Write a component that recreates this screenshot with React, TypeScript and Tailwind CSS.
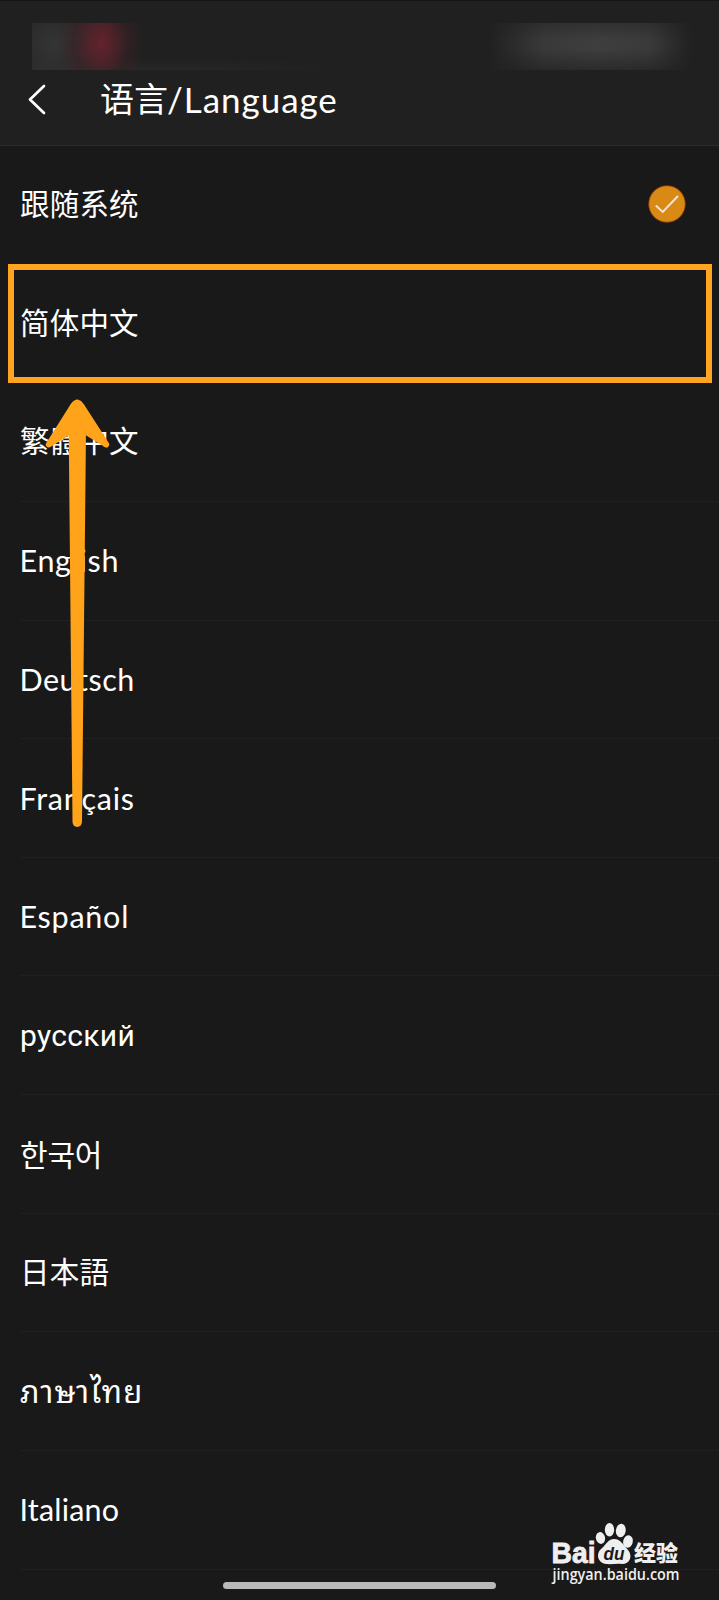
type Language = {
  label: string;
  className: string;
  selected?: boolean;
  divider?: boolean;
};

const LATIN = "font-['Lato',sans-serif] text-[30.5px] -ml-[0.5px]";
const CJK = "font-['Noto_Sans_CJK_SC',sans-serif] text-[29.5px] tracking-[0.2px] pb-[4px]";

const languages: Language[] = [
  { label: '跟随系统', className: CJK, selected: true },
  { label: '简体中文', className: CJK },
  { label: '繁體中文', className: CJK, divider: true },
  { label: 'English', className: `${LATIN} tracking-[0.7px]`, divider: true },
  { label: 'Deutsch', className: `${LATIN} tracking-[0.5px]`, divider: true },
  { label: 'Français', className: `${LATIN} tracking-[0.75px]`, divider: true },
  { label: 'Español', className: `${LATIN} tracking-[0.75px]`, divider: true },
  { label: 'русский', className: "font-['Roboto',sans-serif] text-[30px] tracking-[0.3px] pt-[2px]", divider: true },
  { label: '한국어', className: "font-['Noto_Sans_CJK_KR',sans-serif] text-[30px] tracking-[-0.2px] pb-px", divider: true },
  { label: '日本語', className: "font-['Noto_Sans_CJK_JP',sans-serif] text-[29.5px] tracking-[0.2px] pb-[4px]", divider: true },
  { label: 'ภาษาไทย', className: "font-['Noto_Sans_Thai_Looped','Loma','Waree','Noto_Sans',sans-serif] text-[31px] tracking-[1.1px] pb-[3px]", divider: true },
  { label: 'Italiano', className: `${LATIN} tracking-[0.2px] pb-px`, divider: true },
];

function Header() {
  return (
    <header className="relative h-[146px] shrink-0 border-t border-b border-t-[#151515] border-b-[#2b2b2b] bg-[#202020]">
      {/* Blurred status bar */}
      <div className="absolute top-[22px] left-8 h-[47px] w-[320px] bg-[radial-gradient(ellipse_44px_60px_at_69px_20px,#65222c_0%,#5b222bd0_25%,#3c212590_60%,transparent_100%),radial-gradient(ellipse_75px_60px_at_24px_22px,#353535,transparent),linear-gradient(to_top,#272727,transparent_25%)] mask-r-from-50%" />
      <div className="absolute top-[22px] left-[480px] h-[47px] w-[212px] bg-[linear-gradient(to_bottom,#20202070,transparent_35%,transparent_55%,#202020a0),linear-gradient(to_right,transparent_4%,#393939_30%,#3e3e3e_55%,#3a3a3a_80%,transparent)]" />
      <div className="flex h-full items-end pb-[22px] pl-[27px]">
        <svg className="mb-[8px] h-[32px] w-5 shrink-0" viewBox="0 0 20 32" fill="none" stroke="#fff" strokeWidth="2.7" strokeLinecap="round" strokeLinejoin="round">
          <path d="M17 3 3 16.5 17 30" />
        </svg>
        <h1 className="ml-[53px] flex h-[46px] items-center whitespace-nowrap text-white">
          <span className="pb-[4px] font-['Noto_Sans_CJK_SC',sans-serif] text-[34px] leading-none">语言</span>
          <span className="-ml-px pb-[1px] font-['Lato',sans-serif] text-[35px] leading-none tracking-[0.95px]">/Language</span>
        </h1>
      </div>
    </header>
  );
}

function CheckBadge() {
  return (
    <svg className="mb-px h-[38px] w-[38px]" viewBox="0 0 38 38" fill="none">
      <circle cx="19" cy="19" r="18.3" fill="#d98a14" stroke="#8a3508" strokeWidth="0.8" />
      <path d="M7.8 20.5 14.7 27 30 11" stroke="#fbe3d2" strokeWidth="1.9" />
    </svg>
  );
}

function Arrow() {
  return (
    <svg className="absolute top-[398px] left-[40px] h-[432px] w-[75px]" viewBox="40 398 75 432" fill="#ffa31a" stroke="#ffa31a" strokeLinejoin="round">
      <path strokeWidth="6" d="M77.2 402.5Q75 403 73 406L48.8 444.5 72 430H83L106.3 444.5 81.5 406Q79.5 403 77.2 402.5Z" />
      <path strokeWidth="2" d="M69.7 430H85L81 822Q80.5 826 77.2 826T73.5 822Z" />
    </svg>
  );
}

function Watermark() {
  return (
    <svg className="absolute top-[1516px] left-[545px] h-[76px] w-[142px] overflow-visible" viewBox="545 1516 142 76" fill="#efefef">
      <text x="551.5" y="1562.5" fontFamily="Liberation Sans" fontWeight="700" fontSize="29.5" textLength="44" lengthAdjust="spacingAndGlyphs" stroke="#efefef" strokeWidth="0.8">Bai</text>
      <ellipse cx="600.5" cy="1538" rx="4.6" ry="6" transform="rotate(-12 600.5 1538)" />
      <ellipse cx="609.5" cy="1529.8" rx="4.7" ry="6.8" />
      <ellipse cx="620.8" cy="1530.5" rx="4.9" ry="6.8" transform="rotate(8 620.8 1530.5)" />
      <ellipse cx="628" cy="1541.5" rx="4.8" ry="6.3" transform="rotate(14 628 1541.5)" />
      <path d="M614 1539C608 1539 606 1545 601 1549C596 1553 597 1563 606 1564C611 1564.5 617 1563.5 622 1564C630 1564 633 1556 628 1550C623 1545 621 1539 614 1539Z" />
      <text x="603.5" y="1559.5" fill="#1a1a1a" fontFamily="Liberation Sans" fontWeight="700" fontStyle="italic" fontSize="18" textLength="21" lengthAdjust="spacingAndGlyphs">du</text>
      <text x="634" y="1560.5" fontFamily="Noto Sans CJK SC" fontWeight="900" fontSize="22" textLength="44" lengthAdjust="spacingAndGlyphs">经验</text>
      <text x="552.5" y="1579.5" fontFamily="Open Sans" fontWeight="600" fontSize="16" textLength="127" lengthAdjust="spacingAndGlyphs">jingyan.baidu.com</text>
    </svg>
  );
}

export default function App() {
  return (
    <div className="relative flex h-[1600px] w-[719px] flex-col overflow-hidden bg-[#191919]">
      <Header />
      <ul className="flex flex-col text-white">
        {languages.map((lang) => (
          <li key={lang.label} className="flex h-[118.65px] shrink-0 pl-5">
            <div
              className={`flex flex-1 items-center justify-between border-b pr-[33px] ${
                lang.divider ? 'border-[#202020]' : 'border-transparent'
              }`}
            >
              <span className={`leading-none whitespace-nowrap ${lang.className}`}>{lang.label}</span>
              {lang.selected && <CheckBadge />}
            </div>
          </li>
        ))}
      </ul>

      {/* Highlighted option */}
      <div className="absolute top-[264px] left-2 h-[119px] w-[704px] border-[6px] border-[#ffa322]" />
      <Arrow />
      <Watermark />
      {/* Gesture bar */}
      <div className="absolute top-[1582px] left-[223px] h-[7px] w-[273px] rounded-full bg-[#bab8b9]" />
    </div>
  );
}
